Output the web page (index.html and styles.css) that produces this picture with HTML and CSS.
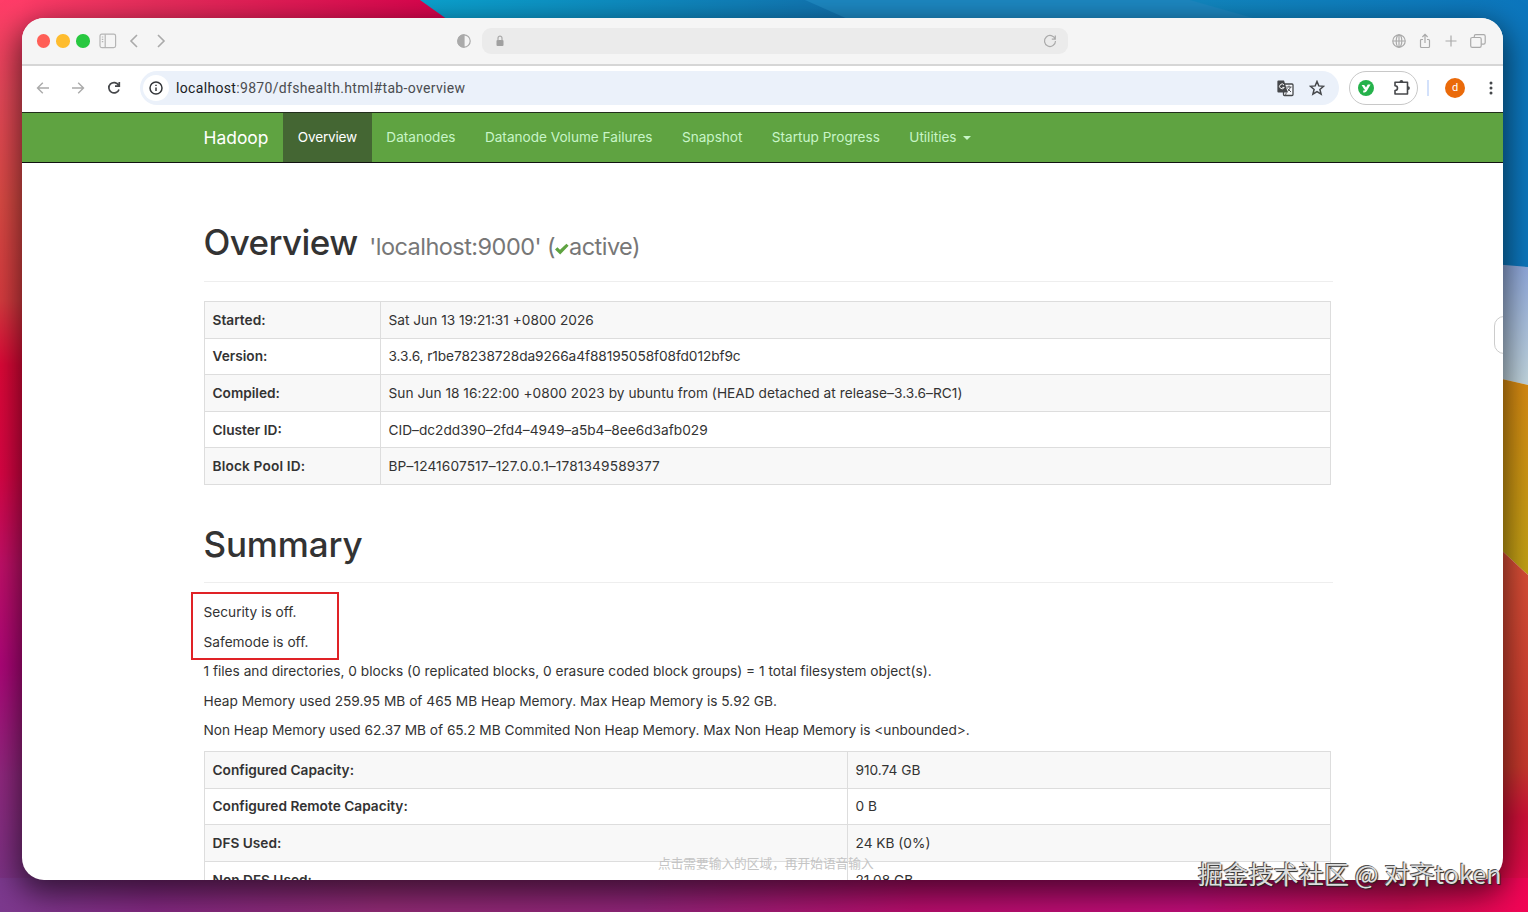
FILE: index.html
```html
<!DOCTYPE html>
<html lang="en">
<head>
<meta charset="utf-8">
<title>Namenode information</title>
<link rel="stylesheet" href="styles.css">
</head>
<body>
<svg class="wallpaper" viewBox="0 0 1528 912" aria-hidden="true">
  <defs>
    <linearGradient id="left" x1="0" y1="0" x2="0" y2="1">
      <stop offset="0" stop-color="#ff3c68"/><stop offset=".1" stop-color="#e8485a"/><stop offset=".22" stop-color="#dd4b45"/><stop offset=".33" stop-color="#da3c40"/><stop offset=".4" stop-color="#e00838"/><stop offset=".52" stop-color="#dc0545"/><stop offset=".62" stop-color="#c4106a"/><stop offset=".73" stop-color="#b0067a"/><stop offset=".85" stop-color="#922880"/><stop offset="1" stop-color="#743585"/>
    </linearGradient>
    <linearGradient id="top" x1="0" y1="0" x2="1" y2="0">
      <stop offset="0" stop-color="#ff3c68"/><stop offset=".3" stop-color="#e82d5c" /><stop offset="1" stop-color="#d8004c"/>
    </linearGradient>
    <linearGradient id="blue" x1="0" y1="0" x2="1" y2="0">
      <stop offset="0" stop-color="#0ba3d0"/><stop offset=".4" stop-color="#1272b0"/><stop offset=".7" stop-color="#1187c0"/><stop offset="1" stop-color="#0c76bd"/>
    </linearGradient>
    <linearGradient id="sky" x1="0" y1="0" x2="0" y2="1">
      <stop offset="0" stop-color="#8fa8dc"/><stop offset="1" stop-color="#c4d8e0"/>
    </linearGradient>
    <linearGradient id="gold" x1="0" y1="0" x2="0" y2="1">
      <stop offset="0" stop-color="#d98a12"/><stop offset="1" stop-color="#c4a315"/>
    </linearGradient>
    <linearGradient id="ember" x1="0" y1="0" x2="0" y2="1">
      <stop offset="0" stop-color="#dd5238"/><stop offset=".62" stop-color="#c8382c"/><stop offset=".75" stop-color="#d01038"/><stop offset="1" stop-color="#ee0555"/>
    </linearGradient>
    <linearGradient id="base" x1="0" y1="0" x2="1" y2="0">
      <stop offset="0" stop-color="#7c398e"/><stop offset=".1" stop-color="#822880"/><stop offset=".25" stop-color="#902a74"/><stop offset=".42" stop-color="#902478"/><stop offset=".6" stop-color="#b80d6c"/><stop offset=".78" stop-color="#c00d78"/><stop offset=".92" stop-color="#cc0c54"/><stop offset="1" stop-color="#f20555"/>
    </linearGradient>
  </defs>
  <rect width="764" height="912" fill="url(#left)"/>
  <rect x="20" width="450" height="60" fill="url(#top)"/>
  <path d="M420 0H1528V270H800Z" fill="url(#blue)"/>
  <path d="M805 0H1190L1260 20H850Z" fill="#1d88c2"/>
  <path d="M1480 263L1528 267V385L1480 374Z" fill="url(#sky)"/>
  <path d="M1480 374L1528 385V575L1480 530Z" fill="url(#gold)"/>
  <path d="M1480 530L1528 575V912H1480Z" fill="url(#ember)"/>
  <rect y="878" width="1528" height="34" fill="url(#base)"/>
</svg>

<main class="window">
  <header class="titlebar">
    <div class="title-left">
      <i class="dot red"></i><i class="dot amber"></i><i class="dot green"></i>
      <svg class="sidebar-icon" width="18" height="16" viewBox="0 0 18 16"><rect x="1" y="1.2" width="15.6" height="13.4" rx="1.8"/><path d="M6.2 1.2V14.6M2.8 4h1.5M2.8 6.3h1.5M2.8 8.6h1.5"/></svg>
      <svg class="back" width="10" height="14" viewBox="0 0 10 14"><path d="M8 1L2 7l6 6"/></svg>
      <svg class="forward" width="10" height="14" viewBox="0 0 10 14"><path d="M2 1l6 6-6 6"/></svg>
    </div>
    <svg class="contrast" width="14" height="14" viewBox="0 0 14 14"><circle cx="7" cy="7" r="6.2"/><path d="M7 .8A6.2 6.2 0 0 0 7 13.2Z" fill="#aaa"/></svg>
    <div class="address">
      <svg width="8" height="12" viewBox="0 0 8 12"><rect x=".5" y="5" width="7" height="6" rx="1" fill="#a0a0a0" stroke="none"/><path d="M2 5.5V3.2a2 2 0 0 1 4 0V5.5"/></svg>
      <svg width="14" height="14" viewBox="0 0 14 14"><path d="M12.2 5.2A5.5 5.5 0 1 0 12.5 7M12.3 1.5V5.2H8.8"/></svg>
    </div>
    <div class="title-right">
      <svg width="14" height="14" viewBox="0 0 14 14"><circle cx="7" cy="7" r="6.2"/><ellipse cx="7" cy="7" rx="2.8" ry="6.2"/><path d="M7 .8V13.2M.8 7H13.2"/></svg>
      <svg width="12" height="16" viewBox="0 0 12 16"><path d="M4 6.5H2.5Q1.5 6.5 1.5 7.5V13.5Q1.5 14.5 2.5 14.5H9.5Q10.5 14.5 10.5 13.5V7.5Q10.5 6.5 9.5 6.5H8M6 10V1.5M3.4 4L6 1.4 8.6 4"/></svg>
      <svg width="12" height="12" viewBox="0 0 12 12"><path d="M6 .5V11.5M.5 6H11.5"/></svg>
      <svg width="16" height="14" viewBox="0 0 16 14"><rect x=".7" y="3.5" width="10.5" height="9.8" rx="1.6"/><path d="M4.3 3.3V2.2Q4.3.7 5.8.7H13.6Q15.2.7 15.2 2.3V8.5Q15.2 10.1 13.6 10.1H11.4"/></svg>
    </div>
  </header>

  <div class="toolbar">
    <svg class="nav-icon faded" width="14" height="14" viewBox="0 0 14 14"><path d="M13 7H1.5M6.8 1.7L1.5 7l5.3 5.3"/></svg>
    <svg class="nav-icon faded" width="14" height="14" viewBox="0 0 14 14"><path d="M1 7H12.5M7.2 1.7L12.5 7l-5.3 5.3"/></svg>
    <svg class="nav-icon" width="14" height="14" viewBox="0 0 14 14"><path d="M11.6 4.2A5.2 5.2 0 1 0 12 8.4M12.3 1V5.2H8"/></svg>
    <div class="omnibox">
      <span class="info"><svg width="14" height="14" viewBox="0 0 14 14"><circle cx="7" cy="7" r="6"/><path d="M7 6.4V10M7 3.8V5"/></svg></span>
      <span class="url"><b>localhost</b>:9870/dfshealth.html#tab-overview</span>
      <svg class="translate" width="17" height="17" viewBox="0 0 17 17"><rect x="6.5" y="4" width="9.5" height="11.5" rx="1" fill="#f7f9fd" stroke="#45474a" stroke-width="1.3"/><path d="M1.3.5H7L10.8 12.5H1.3Q.4 12.5.4 11.6V1.4Q.4.5 1.3.5Z" fill="#45474a"/><path d="M7 5A2.4 2.4 0 1 0 7.2 7.4H5.3" stroke="#fff" fill="none" stroke-width="1"/><path d="M9.3 7H14.6M12 5.6V7M13.5 7Q12.5 10 10.3 11.5M10.5 8.5L14 12M9.3 12.6L8.5 15.3" stroke="#55575a" fill="none" stroke-width="1"/></svg>
      <svg class="star" width="16" height="16" viewBox="0 0 16 16"><path d="M8 1.5L9.8 5.9 14.6 6.3 10.9 9.4 12.1 14.1 8 11.6 3.9 14.1 5.1 9.4 1.4 6.3 6.2 5.9Z"/></svg>
    </div>
    <div class="extensions">
      <svg width="16" height="16" viewBox="0 0 16 16"><circle cx="8" cy="8" r="8" fill="#25b24b"/><path d="M3.6 5H6.2L8 7.4 9.8 4.4H12.6L8.8 11Q8 12.4 6.4 12.4H5.2V10.4H6.2Q7 10.4 7 9.4H6.4Z" fill="#fff"/></svg>
      <svg width="18" height="18" viewBox="0 0 18 18"><path d="M2 3.2H14.5V15H2V11.5Q4.5 11.5 4.5 9.1T2 6.7Z" fill="none" stroke="#45474a" stroke-width="1.6" stroke-linejoin="round"/><path d="M6.5 3A1.9 1.9 0 0 1 10.3 3ZM15 7.2A1.9 1.9 0 0 1 15 11Z" fill="#45474a"/></svg>
    </div>
    <i class="divider"></i>
    <span class="avatar">d</span>
    <svg class="kebab" width="4" height="14" viewBox="0 0 4 14"><circle cx="2" cy="2" r="1.5"/><circle cx="2" cy="7" r="1.5"/><circle cx="2" cy="12" r="1.5"/></svg>
  </div>

  <nav class="navbar">
    <a class="brand">Hadoop</a>
    <a class="active">Overview</a>
    <a>Datanodes</a>
    <a>Datanode Volume Failures</a>
    <a>Snapshot</a>
    <a>Startup Progress</a>
    <a>Utilities <i class="caret"></i></a>
  </nav>

  <section class="content">
    <h1 class="overview">Overview <small>'localhost:9000' (<svg width="14" height="12" viewBox="0 0 14 12"><path d="M0 6.5L2.4 4.3 5 6.8 11.4.7 13.6 2.8 5.2 11.4Z" fill="#5fa341"/></svg>active)</small></h1>
    <table class="facts">
      <tr><th>Started:</th><td>Sat Jun 13 19:21:31 +0800 2026</td></tr>
      <tr><th>Version:</th><td class="hash">3.3.6, r1be78238728da9266a4f88195058f08fd012bf9c</td></tr>
      <tr><th>Compiled:</th><td class="compiled">Sun Jun 18 16:22:00 +0800 2023 by ubuntu from (HEAD detached at release–3.3.6–RC1)</td></tr>
      <tr><th>Cluster ID:</th><td>CID–dc2dd390–2fd4–4949–a5b4–8ee6d3afb029</td></tr>
      <tr><th class="pool-label">Block Pool ID:</th><td class="pool">BP–1241607517–127.0.0.1–1781349589377</td></tr>
    </table>
    <h1 class="summary">Summary</h1>
    <div class="notes">
      <p>Security is off.</p>
      <p>Safemode is off.</p>
      <p>1 files and directories, 0 blocks (0 replicated blocks, 0 erasure coded block groups) = 1 total filesystem object(s).</p>
      <p>Heap Memory used 259.95 MB of 465 MB Heap Memory. Max Heap Memory is 5.92 GB.</p>
      <p class="non-heap">Non Heap Memory used 62.37 MB of 65.2 MB Commited Non Heap Memory. Max Non Heap Memory is &lt;unbounded&gt;.</p>
      <i class="highlight"></i>
    </div>
    <table class="capacity">
      <tr><th>Configured Capacity:</th><td>910.74 GB</td></tr>
      <tr><th>Configured Remote Capacity:</th><td>0 B</td></tr>
      <tr><th>DFS Used:</th><td>24 KB (0%)</td></tr>
      <tr><th>Non DFS Used:</th><td>21.08 GB</td></tr>
    </table>
  </section>
  <i class="side-tab"></i>
  <div class="voice-hint">点击需要输入的区域，再开始语音输入</div>
</main>
<div class="watermark">掘金技术社区 @ 对齐token</div>
</body>
</html>
```
FILE: styles.css
```css
* { box-sizing: border-box; }
body { margin: 0; width: 1528px; height: 912px; overflow: hidden; position: relative; padding: 18px 26px 32px 21.5px; font-family: Inter, "Noto Sans CJK SC", sans-serif; font-size: 13.7px; color: #333; }
.wallpaper { position: absolute; left: 0; top: 0; width: 1528px; height: 912px; }
.window { position: relative; height: 862.4px; width: 1481px; background: #fff; border-radius: 22px; overflow: hidden; box-shadow: 0 10px 30px 4px rgba(0,0,0,.58); }

.titlebar { height: 48px; background: #f5f5f5; border-bottom: 2px solid #d6d6d6; display: flex; align-items: center; }
.titlebar svg { fill: none; stroke: #aaa; stroke-width: 1.2; }
.title-left { display: flex; align-items: center; width: 435px; padding-left: 15px; }
.dot { width: 13.5px; height: 13.5px; border-radius: 50%; margin-right: 6.3px; }
.red { background: #ff5f57; }
.amber { background: #febc2e; }
.green { background: #28c840; }
.titlebar .sidebar-icon { margin-left: 3px; stroke: #b5b5b5; }
.titlebar .back { margin-left: 12px; stroke-width: 1.6; }
.titlebar .forward { margin-left: 17px; stroke-width: 1.6; }
.address { margin-left: 11px; width: 586px; height: 26px; border-radius: 9px; background: #ebebeb; display: flex; align-items: center; justify-content: space-between; padding: 0 11px 0 14px; }
.title-right { margin-left: auto; display: flex; align-items: center; gap: 13.3px; padding-right: 16.5px; }

.toolbar { height: 46px; display: flex; align-items: center; padding: 0 0 2px 14px; }
.nav-icon { flex: none; fill: none; stroke: #45474a; stroke-width: 1.7; margin-right: 21.5px; }
.faded { stroke: #aaa; stroke-width: 1.4; }
.omnibox { flex: none; margin-left: -2px; width: 1199px; height: 34px; border-radius: 17px; background: #ebf1fa; display: flex; align-items: center; padding: 0 14px 0 3px; }
.info { width: 26px; height: 26px; border-radius: 50%; background: #fff; display: grid; place-items: center; }
.info svg { fill: none; stroke: #35373a; stroke-width: 1.5; }
.url { margin-left: 7px; font-family: Roboto, sans-serif; font-size: 14px; letter-spacing: .33px; color: #4a4c50; }
.url b { font-weight: 400; color: #202124; }
.translate { margin-left: auto; margin-right: 15.5px; }
.star { fill: none; stroke: #45474a; stroke-width: 1.5; }
.extensions { flex: none; margin-left: 10px; width: 69px; height: 34px; border: 1px solid #c8c8c8; border-radius: 17px; display: flex; align-items: center; justify-content: space-between; padding: 0 6px 0 8px; }
.divider { flex: none; width: 2px; height: 16px; background: #d3e1fb; margin-left: 9px; }
.avatar { flex: none; width: 20px; height: 20px; border-radius: 50%; background: #ea6a0a; color: #fff; font: 11px/20px Roboto, sans-serif; text-align: center; margin-left: 16px; }
.kebab { flex: none; margin-left: 24px; fill: #45474a; }

.navbar { height: 51px; background: #5fa341; border-top: 1px solid #222e1c; border-bottom: 1px solid #111; display: flex; padding-left: 167.4px; line-height: 49px; }
.navbar a { padding: 0 14.7px; color: #c8f5c8; font-size: 13.6px; white-space: nowrap; }
.navbar .brand { color: #fff; font-size: 17.4px; }
.navbar .active { background: #446633; color: #fff; letter-spacing: -.2px; }
.caret { display: inline-block; border: 4px solid transparent; border-top-color: #c8f5c8; border-bottom: 0; vertical-align: middle; margin-left: 3px; }

.content { padding: 59px 172.5px 0 182px; }
h1 { margin: 0; font-weight: 550; font-size: 35px; line-height: 40px; border-bottom: 1px solid #eee; width: 1129px; white-space: nowrap; }
.overview { height: 60px; letter-spacing: -.6px; }
h1 small { margin-left: 3px; font-weight: 400; font-size: 23.5px; letter-spacing: -.54px; color: #777; }
.summary { height: 59px; margin-top: 39px; letter-spacing: -.15px; }
table { width: 1127px; border-collapse: collapse; table-layout: fixed; }
tr { height: 36.6px; }
tr:nth-child(odd) { background: #f8f8f8; }
th, td { border: 1px solid #ddd; padding: 0 8px; text-align: left; line-height: 20px; white-space: nowrap; }
th { font-weight: 600; }
.facts { margin-top: 19px; }
.facts th { width: 176px; }
.capacity th { width: 643px; }
.hash { letter-spacing: -.08px; }
.compiled { letter-spacing: .03px; }
.pool { letter-spacing: .13px; }
.pool-label { letter-spacing: .15px; }
.notes { position: relative; padding-top: 15px; height: 168px; }
.notes p { margin: 0; height: 29.6px; line-height: 29.6px; white-space: nowrap; }
.notes .non-heap { letter-spacing: -.03px; }
.highlight { position: absolute; left: -13px; top: 9px; width: 148px; height: 68px; border: 2px solid #e02226; }
.side-tab { position: absolute; right: -11px; top: 298px; width: 20px; height: 38px; border: 1px solid #ccc; border-radius: 12px; background: linear-gradient(90deg, #fff 8px, #fbe6b8 9px); }
.voice-hint { position: absolute; left: 636.5px; top: 837px; font-size: 12.7px; line-height: 18px; color: #c4c4c4; white-space: nowrap; }
.watermark { position: absolute; left: 1198px; top: 856px; font: 25.2px/34px "Noto Sans CJK SC", sans-serif; color: #ddd; text-shadow: 1px 1px 1px #222, -1px -1px 0 #555; white-space: nowrap; }
```
